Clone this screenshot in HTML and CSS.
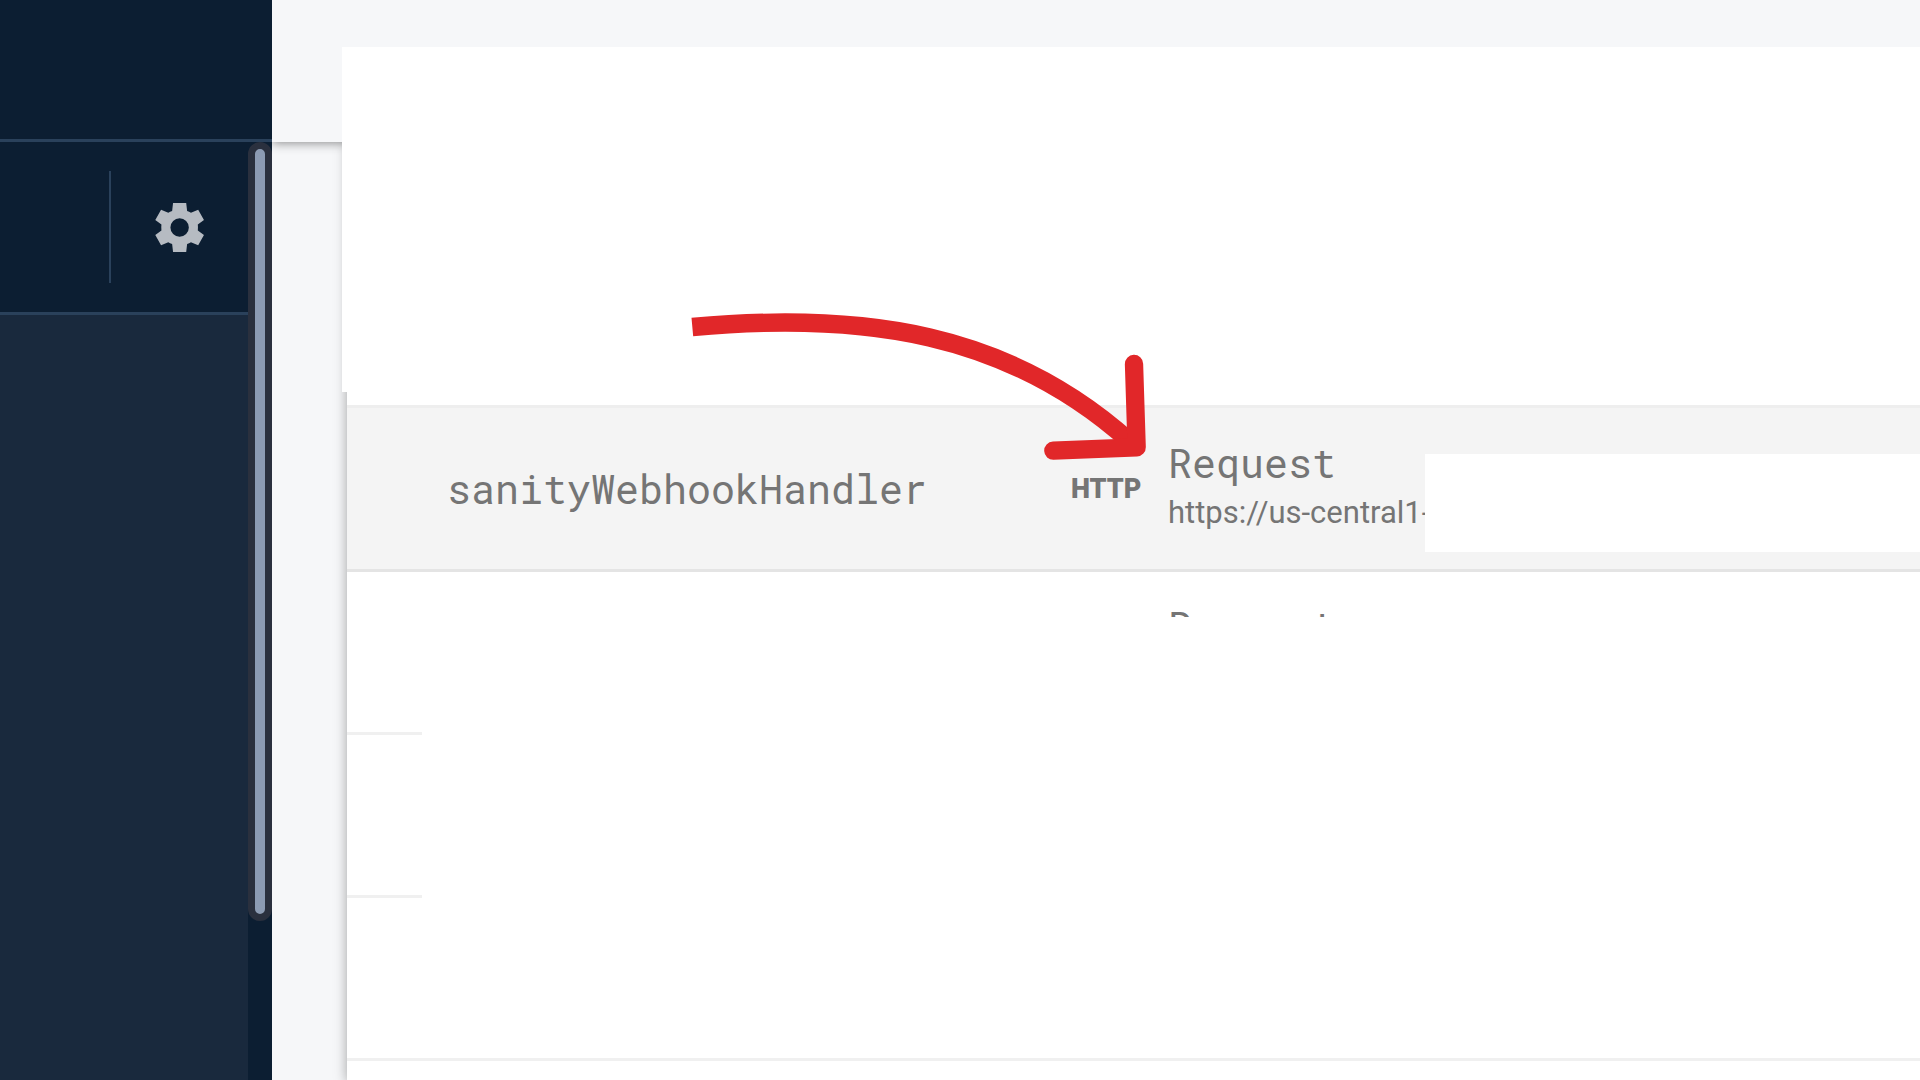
FILE: index.html
```html
<!DOCTYPE html>
<html lang="en">
<head>
    <meta charset="UTF-8">
    <meta name="viewport" content="width=device-width, initial-scale=1.0">
    <title>Functions</title>
    <link rel="stylesheet" href="styles.css">
</head>
<body>

    <aside class="sidebar">
        <div class="sidebar-top"></div>
        <div class="sidebar-body">
            <nav class="sidebar-nav">
                <div class="sidebar-overview">
                    <button type="button" class="settings-button" aria-label="Settings">
                        <svg viewBox="0 -960 960 960" width="59" height="59" fill="currentColor" aria-hidden="true">
                            <path d="M375-80L360-212Q325-222 298-240L180-190L86-358L186-432Q180-480 186-528L86-602L180-770L298-720Q325-738 360-748L375-880H589L604-748Q639-738 666-720L784-770L878-602L778-528Q784-480 778-432L878-358L784-190L666-240Q639-222 604-212L589-80ZM482-330q62 0 106-44t44-106q0-62-44-106t-106-44q-62 0-106 44t-44 106q0 62 44 106t106 44Z"/>
                        </svg>
                    </button>
                </div>
            </nav>
            <div class="scroll-track">
                <div class="scroll-thumb"></div>
            </div>
        </div>
    </aside>

    <main class="content">
        <header class="topbar"></header>
        <section class="card">
            <table class="functions">
                <tbody>
                    <tr class="highlighted">
                        <td class="name">sanityWebhookHandler</td>
                        <td class="type">HTTP</td>
                        <td class="trigger">
                            <div class="event">Request</div>
                            <a class="url" href="#">https://us-central1-</a>
                        </td>
                    </tr>
                    <tr>
                        <td class="name"></td>
                        <td class="type"></td>
                        <td class="trigger">
                            <div class="event">Request</div>
                            <a class="url" href="#">https://us-central1-</a>
                        </td>
                    </tr>
                    <tr><td colspan="3"></td></tr>
                    <tr><td colspan="3"></td></tr>
                </tbody>
            </table>
        </section>

        <!-- white covers over private details -->
        <div class="cover cover-header"></div>
        <div class="cover cover-url"></div>
        <div class="cover cover-rows"></div>

        <svg class="arrow" viewBox="0 0 1560 600" width="520" height="200" fill="none" stroke="#e12729" stroke-width="55" aria-hidden="true">
            <path d="M97 111C610 64 1045 127 1410 455"/>
            <path d="M1422 222L1430 472L1180 482" stroke-linecap="round" stroke-linejoin="round"/>
        </svg>
    </main>

</body>
</html>
```

FILE: styles.css
```css
* {
    box-sizing: border-box;
}

body {
    margin: 0;
    height: 100vh;
    display: flex;
    overflow: hidden;
    font-family: Roboto, Arial, sans-serif;
    color: #757575;
    background-color: #f6f7f9;
}

/* Sidebar */
.sidebar {
    flex: 0 0 272px;
    display: flex;
    flex-direction: column;
    background-color: #0c1e32;
}

.sidebar-top {
    height: 142px;
    border-bottom: 3px solid #2a415b;
}

.sidebar-body {
    flex: 1;
    display: flex;
}

.sidebar-nav {
    flex: 1;
    background-color: #19293d;
}

.sidebar-overview {
    display: flex;
    justify-content: flex-end;
    align-items: center;
    height: 173px;
    background-color: #0c1e32;
    border-bottom: 3px solid #2a415b;
}

.settings-button {
    display: flex;
    justify-content: center;
    align-items: center;
    width: 139px;
    height: 112px;
    padding: 0;
    border: none;
    border-left: 2px solid #2a415b;
    background: none;
    color: #b6bbc2;
    cursor: pointer;
}

.scroll-track {
    width: 24px;
}

.scroll-thumb {
    height: 779px;
    border: 7px solid #2a303e;
    border-radius: 12px;
    background-color: #8c9bb3;
}

/* Main area */
.content {
    flex: 1;
    min-width: 0;
    position: relative;
    display: flex;
    flex-direction: column;
    overflow: hidden;
}

.topbar {
    flex: 0 0 142px;
    z-index: 1;
    background-color: #f6f7f9;
    box-shadow: 0 1px 10px rgba(0, 0, 0, 0.45);
}

.card {
    flex: 1;
    margin-left: 75px;
    padding-top: 263px;
    background-color: white;
    box-shadow: 0 2px 12px rgba(0, 0, 0, 0.35);
}

.functions {
    width: 100%;
    table-layout: fixed;
    border-collapse: separate;
    border-spacing: 0;
    border-top: 3px solid #eeeeee;
}

.functions td {
    height: 163px;
    padding: 0;
    border-bottom: 3px solid #f0f0f0;
}

.functions .highlighted td {
    height: 164px;
    background-color: #f4f4f4;
    border-bottom-color: #e4e4e4;
}

.functions .name {
    width: 724px;
    padding-left: 100px;
    font-family: "Roboto Mono", "DejaVu Sans Mono", monospace;
    font-size: 40px;
}

.functions .type {
    width: 97px;
    font-size: 27px;
    font-weight: 900;
}

.functions .trigger {
    padding-bottom: 4px;
}

.event {
    font-family: "Roboto Mono", "DejaVu Sans Mono", monospace;
    font-size: 40px;
    line-height: 52px;
}

.url {
    font-size: 31px;
    line-height: 48px;
    color: inherit;
    text-decoration: none;
    white-space: nowrap;
}

/* Covers and arrow lie over the card */
.cover {
    position: absolute;
    z-index: 2;
    right: 0;
    background-color: white;
}

.cover-header {
    top: 47px;
    left: 70px;
    height: 345px;
}

.cover-url {
    top: 454px;
    left: 1153px;
    height: 98px;
}

.cover-rows {
    top: 617px;
    left: 150px;
    height: 430px;
}

.arrow {
    position: absolute;
    z-index: 3;
    top: 290px;
    left: 388px;
}
```
